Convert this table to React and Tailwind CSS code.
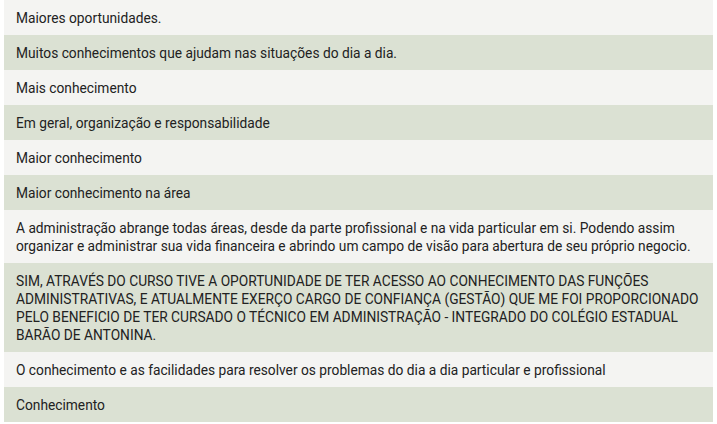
import React from "react";

// each row holds its lines as they break in the reference
const ROWS = [
  ["Maiores oportunidades."],
  ["Muitos conhecimentos que ajudam nas situações do dia a dia."],
  ["Mais conhecimento"],
  ["Em geral, organização e responsabilidade"],
  ["Maior conhecimento"],
  ["Maior conhecimento na área"],
  [
    "A administração abrange todas áreas, desde da parte profissional e na vida particular em si. Podendo assim",
    "organizar e administrar sua vida financeira e abrindo um campo de visão para abertura de seu próprio negocio.",
  ],
  [
    "SIM, ATRAVÉS DO CURSO TIVE A OPORTUNIDADE DE TER ACESSO AO CONHECIMENTO DAS FUNÇÕES",
    "ADMINISTRATIVAS, E ATUALMENTE EXERÇO CARGO DE CONFIANÇA (GESTÃO) QUE ME FOI PROPORCIONADO",
    "PELO BENEFICIO DE TER CURSADO O TÉCNICO EM ADMINISTRAÇÃO - INTEGRADO DO COLÉGIO ESTADUAL",
    "BARÃO DE ANTONINA.",
  ],
  ["O conhecimento e as facilidades para resolver os problemas do dia a dia particular e profissional"],
  ["Conhecimento"],
];

export default function App() {
  return (
    <div className="w-[717px] h-[424px] bg-white pl-1 font-['Roboto',sans-serif]">
      <div className="w-[709px] flex flex-col">
        {ROWS.map((lines, i) => (
          <div
            key={i}
            className={`px-3 py-[8.5px] text-[13.75px] leading-[18px] text-[#222222] whitespace-nowrap overflow-hidden ${
              i % 2 === 0 ? "bg-[#f4f4f2]" : "bg-[#dbe1d3]"
            }`}
          >
            {lines.map((line, j) => (
              <div key={j}>{line}</div>
            ))}
          </div>
        ))}
      </div>
    </div>
  );
}
